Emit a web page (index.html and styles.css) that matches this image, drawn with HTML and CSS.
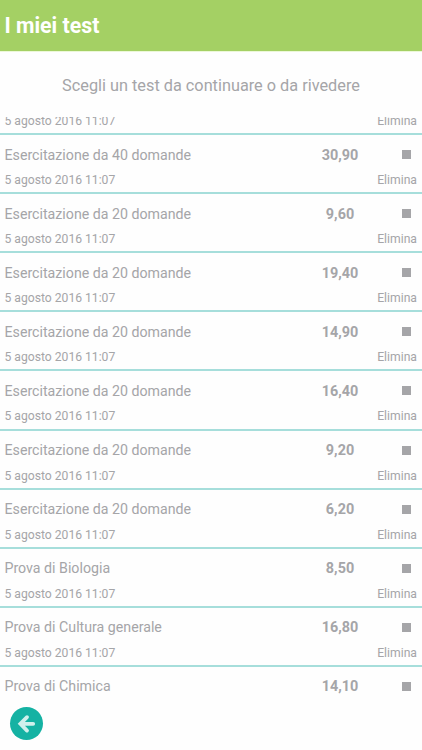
FILE: index.html
```html
<!DOCTYPE html>
<html lang="it">
<head>
  <meta charset="UTF-8" />
  <meta name="viewport" content="width=device-width, initial-scale=1.0" />
  <title>I miei test</title>
  <link rel="stylesheet" href="styles.css">
</head>
<body>
  <header>I miei test</header>
  <p class="intro">Scegli un test da continuare o da rivedere</p>

  <div class="test-list">
    <ul>
      <li class="test">
        <span class="date">5 agosto 2016 11:07</span><a class="delete">Elimina</a>
      </li>
      <li class="test">
        <span class="name">Esercitazione da 40 domande</span><span class="score">30,90</span><span class="status"></span>
        <span class="date">5 agosto 2016 11:07</span><a class="delete">Elimina</a>
      </li>
      <li class="test">
        <span class="name">Esercitazione da 20 domande</span><span class="score">9,60</span><span class="status"></span>
        <span class="date">5 agosto 2016 11:07</span><a class="delete">Elimina</a>
      </li>
      <li class="test">
        <span class="name">Esercitazione da 20 domande</span><span class="score">19,40</span><span class="status"></span>
        <span class="date">5 agosto 2016 11:07</span><a class="delete">Elimina</a>
      </li>
      <li class="test">
        <span class="name">Esercitazione da 20 domande</span><span class="score">14,90</span><span class="status"></span>
        <span class="date">5 agosto 2016 11:07</span><a class="delete">Elimina</a>
      </li>
      <li class="test">
        <span class="name">Esercitazione da 20 domande</span><span class="score">16,40</span><span class="status"></span>
        <span class="date">5 agosto 2016 11:07</span><a class="delete">Elimina</a>
      </li>
      <li class="test">
        <span class="name">Esercitazione da 20 domande</span><span class="score">9,20</span><span class="status"></span>
        <span class="date">5 agosto 2016 11:07</span><a class="delete">Elimina</a>
      </li>
      <li class="test">
        <span class="name">Esercitazione da 20 domande</span><span class="score">6,20</span><span class="status"></span>
        <span class="date">5 agosto 2016 11:07</span><a class="delete">Elimina</a>
      </li>
      <li class="test">
        <span class="name">Prova di Biologia</span><span class="score">8,50</span><span class="status"></span>
        <span class="date">5 agosto 2016 11:07</span><a class="delete">Elimina</a>
      </li>
      <li class="test">
        <span class="name">Prova di Cultura generale</span><span class="score">16,80</span><span class="status"></span>
        <span class="date">5 agosto 2016 11:07</span><a class="delete">Elimina</a>
      </li>
      <li class="test">
        <span class="name">Prova di Chimica</span><span class="score">14,10</span><span class="status"></span>
      </li>
    </ul>
  </div>

  <footer>
    <button class="btn-back" aria-label="Indietro">
      <svg viewBox="0 0 33 33" width="33" height="33">
        <path d="M17 10.2 L10.4 16.8 L17 23.6 M11 16.8 H23.2" fill="none" stroke="#d0f0ec" stroke-width="3.8" stroke-linecap="round" stroke-linejoin="miter" />
      </svg>
    </button>
  </footer>
</body>
</html>
```
FILE: styles.css
```css
body {
  font-family: Roboto, 'Liberation Sans', sans-serif;
  background-color: #fefefe;
  color: #a5a5a8;
  margin: 0;
  height: 750px;
  display: flex;
  flex-direction: column;
  overflow: hidden;
}
header {
  box-sizing: border-box;
  background-color: #a4d064;
  color: white;
  height: 52px;
  line-height: 51px;
  padding-left: 4.5px;
  border-bottom: 1px solid #ecf8d8;
  font-size: 21.3px;
  font-weight: bold;
}
.intro {
  box-sizing: border-box;
  margin: 0;
  height: 65px;
  padding-top: 24px;
  line-height: 20px;
  text-align: center;
  font-size: 16.3px;
}
.test-list {
  height: 585px;
  overflow: hidden;
}
/* the list is scrolled, the first row is partly hidden */
.test-list ul {
  list-style: none;
  margin: -41px 0 0;
  padding: 0;
}
.test {
  box-sizing: border-box;
  height: 59.1px;
  padding: 6px 5px 0 4.5px;
  border-bottom: 2px solid #a6dedb;
  display: grid;
  grid-template-columns: 300px 71px 1fr;
  grid-template-rows: 27px 24px;
  align-items: center;
}
.test:last-child {
  border-bottom: none;
}
.name {
  font-size: 14.2px;
}
.score {
  padding-top: 1px;
  font-size: 14.4px;
  font-weight: bold;
  text-align: center;
}
.status {
  width: 9px;
  height: 9px;
  margin-left: 26.5px;
  background-color: #a5a5a8;
}
.date {
  grid-row: 2;
  font-size: 12.15px;
}
.delete {
  grid-column: 3;
  grid-row: 2;
  font-size: 12.2px;
  text-align: right;
}
footer {
  padding: 5px 10px;
}
.btn-back {
  display: block;
  width: 33px;
  height: 33px;
  padding: 0;
  border: none;
  border-radius: 50%;
  background-color: #15b2a3;
  cursor: pointer;
}
.btn-back svg {
  display: block;
}
```
